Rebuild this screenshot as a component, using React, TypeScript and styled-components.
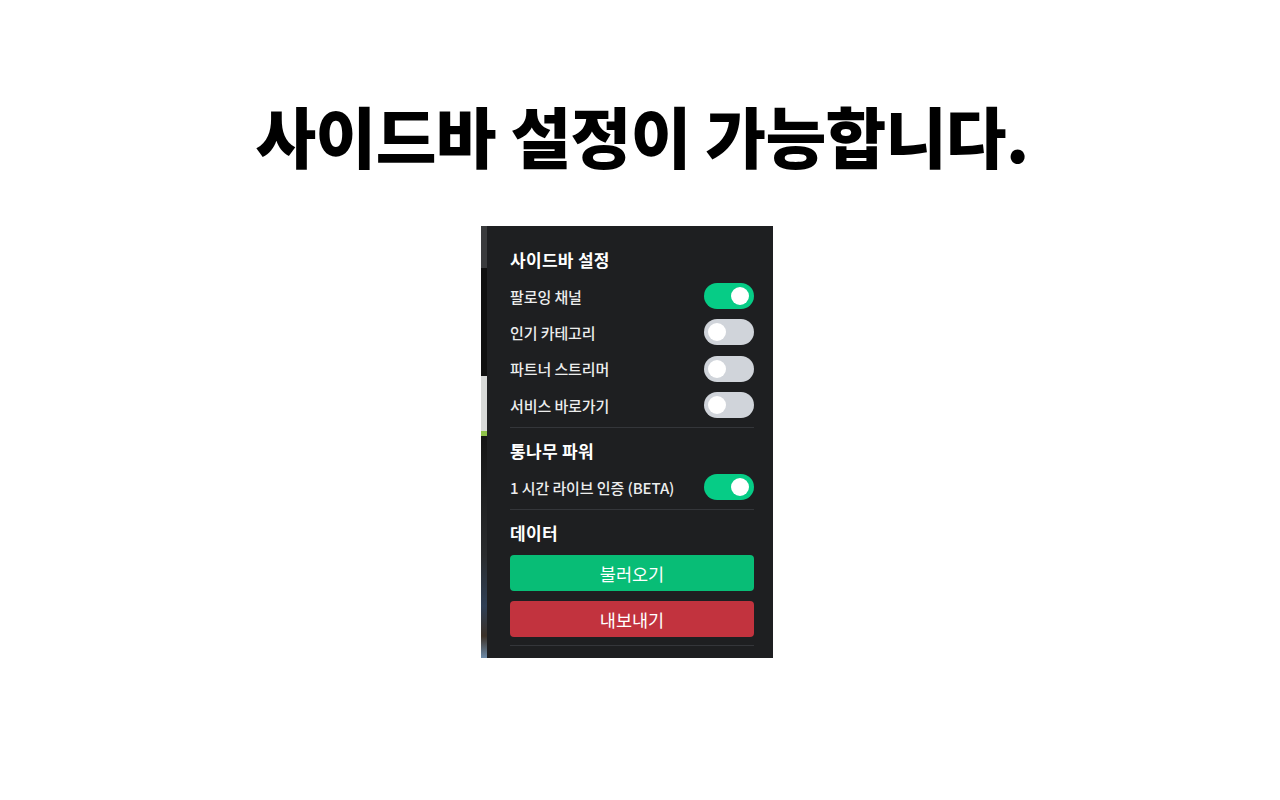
import styled, { createGlobalStyle } from "styled-components";

const GlobalStyle = createGlobalStyle`
  html, body {
    margin: 0;
    padding: 0;
    background: #ffffff;
    font-family: "Noto Sans CJK KR", "Noto Sans", sans-serif;
  }
`;

const Page = styled.div`
  width: 1280px;
  height: 800px;
  display: flex;
  flex-direction: column;
  align-items: center;
  box-sizing: border-box;
  padding-top: 87px;
`;

const Headline = styled.h1`
  margin: 0 0 0 4px;
  font-size: 66px;
  line-height: 94px;
  font-weight: 900;
  letter-spacing: -0.6px;
  color: #000;
`;

const Shot = styled.div`
  margin: 45px 26px 0 0;
  width: 292px;
  height: 432px;
  display: flex;
  background: #1e1f21;
`;

const EdgeStrip = styled.div`
  width: 6px;
  flex-shrink: 0;
  background: linear-gradient(
    180deg,
    #3a3b3d 0px,
    #3a3b3d 42px,
    #101010 42px,
    #101010 150px,
    #d8dad8 150px,
    #d8dad8 205px,
    #8fc24a 205px,
    #8fc24a 210px,
    #151515 210px,
    #2a2c2e 330px,
    #2f3f55 380px,
    #3b3128 410px,
    #6c8aa8 432px
  );
`;

const Panel = styled.div`
  flex: 1;
  padding: 22px 19px 0 23px;
  display: flex;
  flex-direction: column;
`;

const Section = styled.div`
  display: flex;
  flex-direction: column;
  padding-bottom: 4px;
  border-bottom: 1px solid #34363a;
  margin-bottom: 11px;
`;

const SectionTitle = styled.div`
  color: #ffffff;
  font-size: 17px;
  font-weight: 700;
  line-height: 24px;
  letter-spacing: 0.3px;
  margin-bottom: 6px;
`;

const Row = styled.div`
  display: flex;
  align-items: center;
  justify-content: space-between;
  height: 36.3px;
`;

const Label = styled.span`
  color: #eceded;
  font-size: 15px;
  font-weight: 500;
  letter-spacing: -0.1px;
`;

const Track = styled.div<{ $on: boolean }>`
  position: relative;
  width: 50px;
  height: 26px;
  border-radius: 13px;
  background: ${({ $on }) => ($on ? "#06cc86" : "#d0d4da")};
`;

const Knob = styled.div<{ $on: boolean }>`
  position: absolute;
  top: 4px;
  left: ${({ $on }) => ($on ? "27px" : "4px")};
  width: 18px;
  height: 18px;
  border-radius: 50%;
  background: #ffffff;
`;

const Buttons = styled.div`
  display: flex;
  flex-direction: column;
  gap: 10px;
  margin: 4px 0 4px;
`;

const ActionButton = styled.button<{ $tone: "green" | "red" }>`
  height: 36px;
  border: none;
  border-radius: 4px;
  color: #ffffff;
  font-family: inherit;
  font-size: 17.5px;
  font-weight: 400;
  background: ${({ $tone }) => ($tone === "green" ? "#08bd76" : "#c2333e")};
`;

const Toggle = ({ on }: { on: boolean }) => (
  <Track $on={on}>
    <Knob $on={on} />
  </Track>
);

const sidebarRows: [string, boolean][] = [
  ["팔로잉 채널", true],
  ["인기 카테고리", false],
  ["파트너 스트리머", false],
  ["서비스 바로가기", false],
];

export default function App() {
  return (
    <>
      <GlobalStyle />
      <Page>
        <Headline>사이드바 설정이 가능합니다.</Headline>
        <Shot>
          <EdgeStrip />
          <Panel>
            <Section>
              <SectionTitle>사이드바 설정</SectionTitle>
              {sidebarRows.map(([label, on]) => (
                <Row key={label}>
                  <Label>{label}</Label>
                  <Toggle on={on} />
                </Row>
              ))}
            </Section>
            <Section>
              <SectionTitle>통나무 파워</SectionTitle>
              <Row>
                <Label>1 시간 라이브 인증 (BETA)</Label>
                <Toggle on />
              </Row>
            </Section>
            <Section>
              <SectionTitle>데이터</SectionTitle>
              <Buttons>
                <ActionButton $tone="green">불러오기</ActionButton>
                <ActionButton $tone="red">내보내기</ActionButton>
              </Buttons>
            </Section>
          </Panel>
        </Shot>
      </Page>
    </>
  );
}
